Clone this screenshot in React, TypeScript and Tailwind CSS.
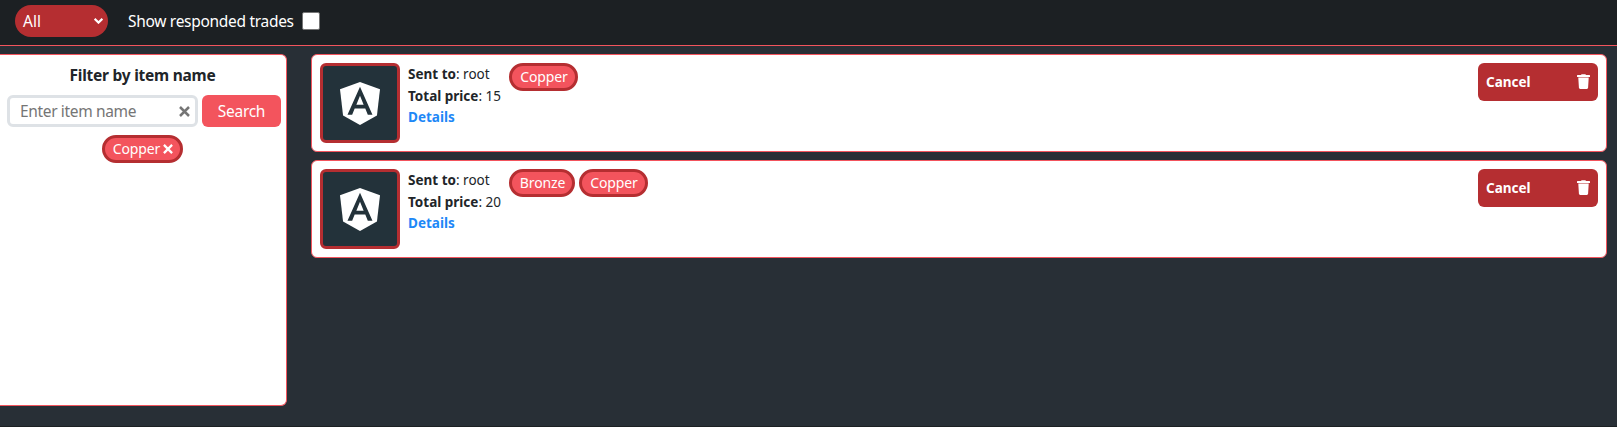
import type { ReactNode } from "react";

function CloseIcon({ className }: { className: string }) {
  return (
    <svg viewBox="0 0 11 11" className={className} fill="none" stroke="currentColor" strokeWidth="2.5">
      <path d="M1 1 10 10M10 1 1 10" />
    </svg>
  );
}

function AngularLogo() {
  return (
    <svg viewBox="31.9 30 186.2 200" className="h-[43px] w-10">
      <path fill="#fff" d="M125 30 31.9 63.2 46.1 186.3 125 230 203.9 186.3 218.1 63.2z" />
      <path
        fill="#23323a"
        fillRule="evenodd"
        d="M125 52.1 66.8 182.600h21.700l11.700-29.200h49.400l11.700 29.200H183L125 52.100zm17 83.300h-34l17-40.900z"
      />
    </svg>
  );
}

function TrashIcon() {
  return (
    <svg viewBox="0 0 13 15" className="mb-px h-[15px] w-[13px]" fill="#fff">
      <path d="M.6 1h3.400l.6-.8h3.800l.6.8h3.400q.6 0 .6.600V3H0V1.600Q0 1 .6 1z" />
      <path d="M1.300 3.600h10.400l-.6 10q-.1 1.400-1.300 1.400H3.200q-1.200 0-1.300-1.400z" />
    </svg>
  );
}

function Tag({ width, children }: { width: string; children: ReactNode }) {
  return (
    <span
      className={`flex h-7 items-center justify-center rounded-full border-[3px] border-[#b52e31] bg-[#f3545d] pl-px text-[14px] leading-none tracking-[-0.15px] text-white ${width}`}
    >
      {children}
    </span>
  );
}

function Trade({ price, children }: { price: number; children: ReactNode }) {
  return (
    <article className="flex h-[98px] items-start rounded-md border border-[#f3545d] bg-white p-2 text-[13.500px] text-[#212529]">
      <div className="flex size-20 shrink-0 items-center justify-center rounded-md border-[3px] border-[#b52e31] bg-[#23323a]">
        <AngularLogo />
      </div>
      <div className="ml-2 w-[101px] shrink-0 whitespace-nowrap pt-px leading-[21.500px]">
        <div><b>Sent to</b>: root</div>
        <div><b>Total price</b>: {price}</div>
        <a className="block font-bold text-[#1e88f7]">Details</a>
      </div>
      <div className="flex gap-1">{children}</div>
      <button className="ml-auto flex h-[38px] w-[120px] items-center justify-between rounded-md bg-[#b52e31] px-2 font-bold text-white">
        <span>Cancel</span>
        <TrashIcon />
      </button>
    </article>
  );
}

export default function App() {
  return (
    <div className="flex h-[427px] flex-col overflow-hidden border-b border-[#1c2023] bg-[#282f36] font-['Noto_Sans','Open_Sans',sans-serif] text-[15.500px]">
      <header className="flex h-[46px] shrink-0 items-start border-b border-[#f3545d] bg-[#1c2023] pl-[15px] text-white">
        <button className="mt-[5px] flex h-8 w-[93px] items-center justify-between rounded-full bg-[#b52e31] pr-[5px] pl-2">
          <span className="pt-0.5">All</span>
          <svg viewBox="0 0 9 6" className="h-[6px] w-[9px]" fill="none" stroke="#fff" strokeWidth="2.2">
            <path d="M.6.8 4.500 4.600 8.400.8" />
          </svg>
        </button>
        <label className="ml-5 flex h-[42px] items-center">
          <span className="w-[174px] whitespace-nowrap pt-0.5 tracking-[-0.3px]">Show responded trades</span>
          <span className="size-[18px] rounded-[2px] border border-[#767676] bg-white" />
        </label>
      </header>
      <div className="flex items-start pt-2">
        <aside className="h-[352px] w-[287px] shrink-0 rounded-r-md border-y border-r border-[#f3545d] bg-white pl-[7px] text-[#212529]">
          <h2 className="flex h-10 w-[271px] items-center justify-center whitespace-nowrap pt-0.5 font-bold tracking-[-0.25px]">
            Filter by item name
          </h2>
          <div className="flex gap-1">
            <div className="flex h-8 w-[191px] items-center justify-between rounded-md border-[3px] border-[#dee2e6] pr-[5px] pl-[10px] text-[#757575]">
              <span className="pt-0.5 tracking-[-0.35px]">Enter item name</span>
              <CloseIcon className="size-[11px]" />
            </div>
            <button className="h-8 w-[79px] rounded-md bg-[#f3545d] pt-px tracking-[-0.3px] text-white">Search</button>
          </div>
          <div className="mt-2 flex w-[271px] justify-center">
            <Tag width="w-[81px]">
              <span>Copper</span>
              <CloseIcon className="ml-[3px] size-[10px]" />
            </Tag>
          </div>
        </aside>
        <main className="mr-[10px] ml-6 flex grow flex-col gap-2">
          <Trade price={15}>
            <Tag width="w-[69px]">Copper</Tag>
          </Trade>
          <Trade price={20}>
            <Tag width="w-[66px]">Bronze</Tag>
            <Tag width="w-[69px]">Copper</Tag>
          </Trade>
        </main>
      </div>
    </div>
  );
}
